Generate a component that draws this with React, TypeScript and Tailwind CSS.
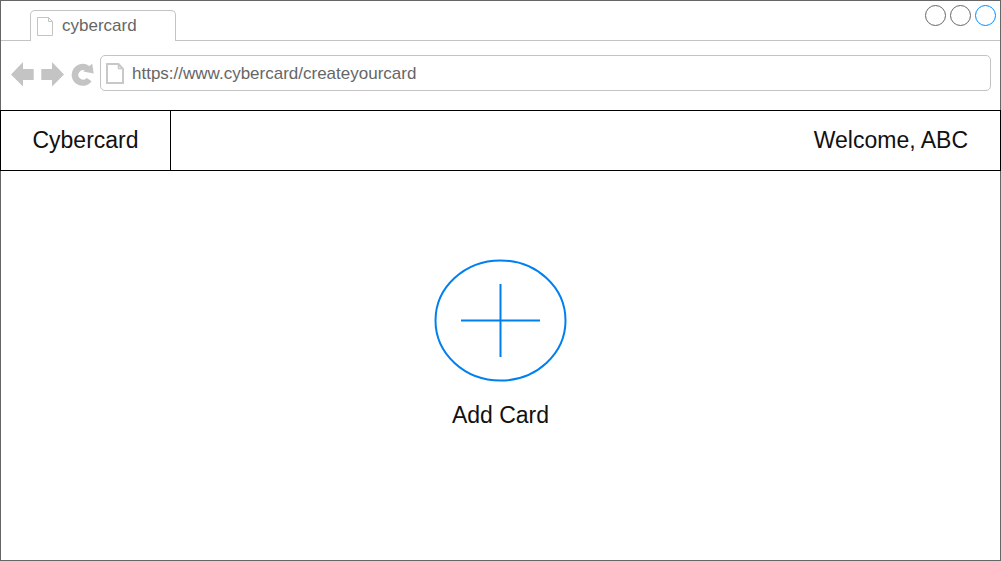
import React from 'react';

function PageIcon({ heavy = false }: { heavy?: boolean }) {
  return heavy ? (
    <svg width="18" height="21" viewBox="0 0 18 21" fill="none" stroke="#c8c8c8" strokeWidth="2" aria-hidden="true">
      <path d="M1 1H12.5L17 6V20H1Z" />
      <path d="M12.5 1V5.5H17" strokeWidth="1.5" />
    </svg>
  ) : (
    <svg width="16" height="19" viewBox="0 0 16 19" fill="none" stroke="#c4c4c4" aria-hidden="true">
      <path d="M0.5 0.5H11.5L15.5 4.5V18.5H0.5Z" />
      <path d="M11.5 0.5V4.5H15.5" />
    </svg>
  );
}

function NavButton({ label, path }: { label: string; path: string }) {
  return (
    <button type="button" aria-label={label} className="shrink-0">
      <svg width="24" height="28" viewBox="0 0 24 28" fill="#c4c4c4" className="block" aria-hidden="true">
        <path d={path} />
      </svg>
    </button>
  );
}

function TabStrip() {
  return (
    <div className="flex h-10 items-end">
      <div className="w-[29px] shrink-0 self-stretch border-b border-[#c4c4c4]" />
      <div className="flex h-[31px] w-[146px] shrink-0 items-center gap-[9px] rounded-t-[5px] border border-b-0 border-[#c4c4c4] px-1.5 text-[17px] leading-5 text-[#666666]">
        <PageIcon />
        <span>cybercard</span>
      </div>
      <div className="flex flex-1 items-start justify-end gap-1 self-stretch border-b border-[#c4c4c4] pt-1 pr-1">
        <button type="button" aria-label="Minimize" className="size-[21px] rounded-full border border-[#666666]" />
        <button type="button" aria-label="Maximize" className="size-[21px] rounded-full border border-[#666666]" />
        <button type="button" aria-label="Close" className="size-[21px] rounded-full border border-[#008cff]" />
      </div>
    </div>
  );
}

function Toolbar() {
  return (
    <div className="flex items-center gap-1.5 px-[9px] pt-3.5 pb-[19px]">
      <NavButton label="Back" path="M1 15.5L13 3V10H23.7V21H13V27.5Z" />
      <NavButton label="Forward" path="M24 15.5L12 3V10H1.3V21H12V27.5Z" />
      <NavButton
        label="Reload"
        path="M19.3 7L22.3 4.7L23.7 14.5L13.2 12.6L14.8 11.3A4.8 4.8 0 1 0 16.8 19L21.6 22.2A11 11 0 1 1 19.3 7Z"
      />
      <label className="flex h-9 flex-1 items-center gap-2 rounded-[5px] border border-[#c4c4c4] px-[5px]">
        <PageIcon heavy />
        <input
          type="text"
          aria-label="Address"
          defaultValue="https://www.cybercard/createyourcard"
          className="min-w-0 flex-1 bg-transparent pt-0.5 text-[17px] leading-5 text-[#666666] outline-none"
        />
      </label>
    </div>
  );
}

export default function App() {
  return (
    <div className="flex min-h-screen flex-col border border-[#666666] bg-white font-['Liberation_Sans',Arial,sans-serif]">
      <TabStrip />
      <Toolbar />
      <header className="-mx-px flex h-[61px] items-stretch justify-between border border-black text-[23px] leading-[26px] text-[#111111]">
        <h1 className="flex w-[170px] items-center justify-center border-r border-black pb-0.5">Cybercard</h1>
        <p className="flex items-center px-8 pb-0.5">Welcome, ABC</p>
      </header>
      <main className="flex flex-1 flex-col items-center pt-[88px]">
        <button type="button" className="flex flex-col items-center gap-5 text-[23px] leading-[26px] text-[#111111]">
          <svg width="133" height="123" viewBox="0 0 133 123" fill="none" stroke="#0080f0" strokeWidth="2" aria-hidden="true">
            <ellipse cx="66.5" cy="61.5" rx="65" ry="60" />
            <path d="M27 61.5H106M66.5 25V98" />
          </svg>
          <span>Add Card</span>
        </button>
      </main>
    </div>
  );
}
